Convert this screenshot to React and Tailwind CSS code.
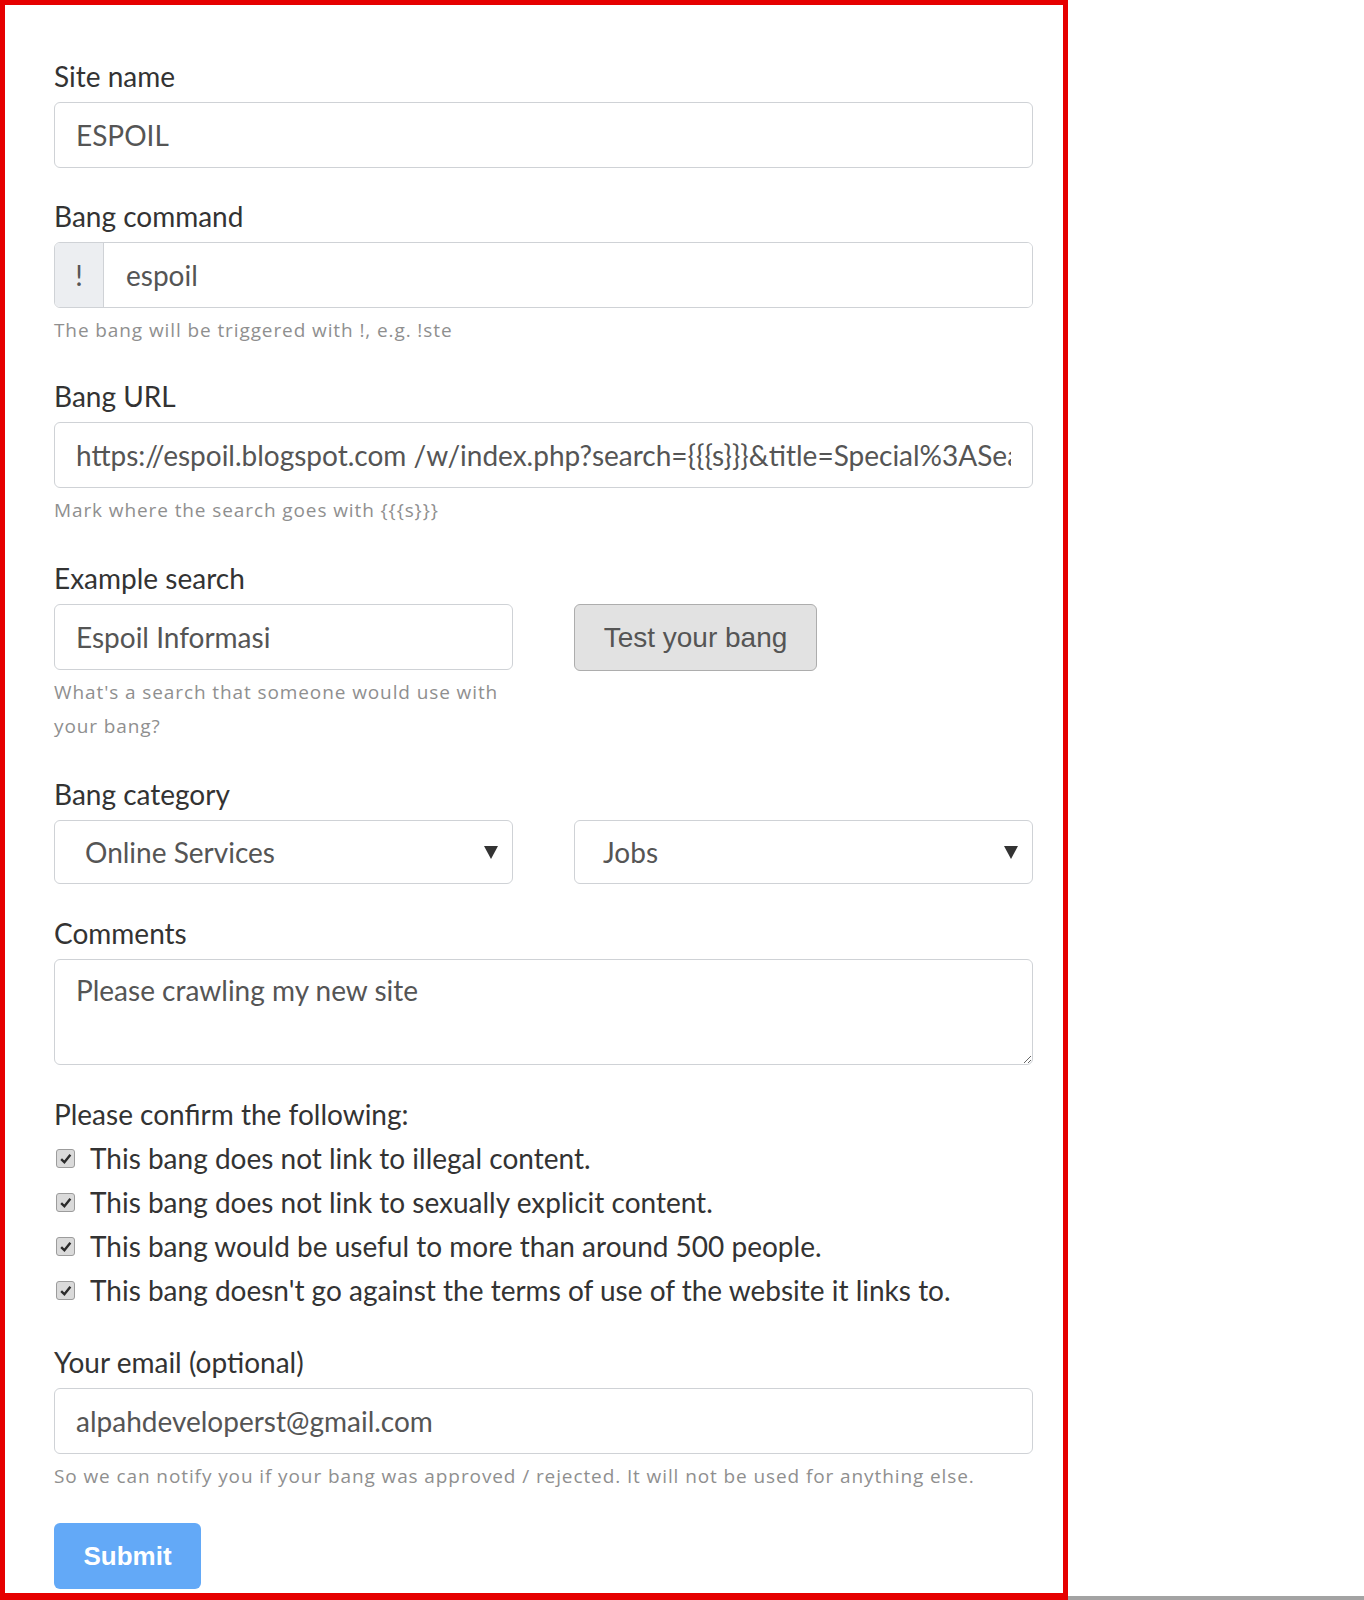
const labelCls = "block font-['Lato',sans-serif] text-[28px] leading-[36px] text-[#333] mb-2"
const inputCls =
  "block w-full h-[66px] px-[21px] border border-[#cfd2d6] rounded-[6px] bg-white font-['Lato',sans-serif] text-[28px] text-[#555] outline-none"
const helpCls =
  "mt-[5px] font-['Open_Sans',sans-serif] text-[19px] tracking-[0.9px] leading-[34px] text-[#8f8f8f]"

const Caret = () => (
  <svg width="16" height="15" viewBox="0 0 16 15" className="shrink-0">
    <polygon points="1,1 15,1 8,14" fill="#333" />
  </svg>
)

const Select = ({ value, pad }) => (
  <div
    className={`flex items-center justify-between h-[64px] pr-[13px] border border-[#cfd2d6] rounded-[6px] bg-white font-['Lato',sans-serif] text-[28px] text-[#555] ${pad}`}
  >
    <span>{value}</span>
    <Caret />
  </div>
)

const Check = ({ children }) => (
  <label className="flex items-center h-[44px] font-['Lato',sans-serif] text-[28px] text-[#333]">
    <span className="flex items-center justify-center w-[19px] h-[19px] ml-[2px] mr-[15px] bg-[#dadada] border border-[#9c9c9c] rounded-[3px]">
      <svg width="13" height="13" viewBox="0 0 12 12">
        <path d="M2 6.5 L5 9.5 L10.5 2.5" fill="none" stroke="#2b2b2b" strokeWidth="2.2" />
      </svg>
    </span>
    {children}
  </label>
)

export default function App() {
  return (
    <div className="flex w-[1364px] h-[1600px] bg-white">
      <div className="w-[1068px] h-[1600px] shrink-0 overflow-hidden border-[5px] border-b-[7px] border-[#e60000] pl-[49px] pr-[30px] pt-[53px]">
        <div className="mb-[30px]">
          <label className={labelCls}>Site name</label>
          <input className={inputCls} defaultValue="ESPOIL" />
        </div>

        <div className="mb-[31px]">
          <label className={labelCls}>Bang command</label>
          <div className="flex h-[66px] border border-[#cfd2d6] rounded-[6px] overflow-hidden">
            <span className="flex items-center justify-center w-[49px] bg-[#eceef1] border-r border-[#cfd2d6] font-['Lato',sans-serif] text-[28px] text-[#555]">
              !
            </span>
            <input
              className="flex-1 px-[22px] bg-white font-['Lato',sans-serif] text-[28px] text-[#555] outline-none"
              defaultValue="espoil"
            />
          </div>
          <p className={helpCls}>The bang will be triggered with !, e.g. !ste</p>
        </div>

        <div className="mb-[33px]">
          <label className={labelCls}>Bang URL</label>
          <input
            className={inputCls}
            defaultValue="https://espoil.blogspot.com /w/index.php?search={{{s}}}&title=Special%3ASearch&go=Go"
          />
          <p className={helpCls}>Mark where the search goes with {"{{{s}}}"}</p>
        </div>

        <div className="mb-[33px]">
          <label className={labelCls}>Example search</label>
          <div className="grid grid-cols-2 gap-x-[61px]">
            <div>
              <input className={inputCls} defaultValue="Espoil Informasi" />
              <p className={helpCls}>What's a search that someone would use with your bang?</p>
            </div>
            <div>
              <button className="w-[243px] h-[67px] bg-[#e2e2e2] border border-[#adadad] rounded-[6px] font-['Liberation_Sans',Arial,sans-serif] text-[28px] text-[#555]">
                Test your bang
              </button>
            </div>
          </div>
        </div>

        <div className="mb-[31px]">
          <label className={labelCls}>Bang category</label>
          <div className="grid grid-cols-2 gap-x-[61px]">
            <Select value="Online Services" pad="pl-[30px]" />
            <Select value="Jobs" pad="pl-[28px]" />
          </div>
        </div>

        <div className="mb-[27px]">
          <label className={labelCls}>Comments</label>
          <textarea
            className="block w-full h-[106px] px-[21px] py-[12px] border border-[#cfd2d6] rounded-[6px] bg-white font-['Lato',sans-serif] text-[28px] leading-[36px] text-[#555] outline-none resize-y"
            defaultValue="Please crawling my new site"
          />
        </div>

        <div className="mb-[32px]">
          <p className="h-[44px] flex items-center font-['Lato',sans-serif] text-[28px] text-[#333]">
            Please confirm the following:
          </p>
          <Check>This bang does not link to illegal content.</Check>
          <Check>This bang does not link to sexually explicit content.</Check>
          <Check>This bang would be useful to more than around 500 people.</Check>
          <Check>This bang doesn't go against the terms of use of the website it links to.</Check>
        </div>

        <div className="mb-[30px]">
          <label className={labelCls}>Your email (optional)</label>
          <input className={inputCls} defaultValue="alpahdeveloperst@gmail.com" />
          <p className={helpCls}>
            So we can notify you if your bang was approved / rejected. It will not be used for anything else.
          </p>
        </div>

        <button className="w-[147px] h-[66px] bg-[#63a9f7] rounded-[6px] font-['Liberation_Sans',Arial,sans-serif] font-bold text-[26px] text-white">
          Submit
        </button>
      </div>
      <div className="flex-1 flex flex-col justify-end">
        <div className="h-[4px] bg-[#a3a3a3]" />
      </div>
    </div>
  )
}
